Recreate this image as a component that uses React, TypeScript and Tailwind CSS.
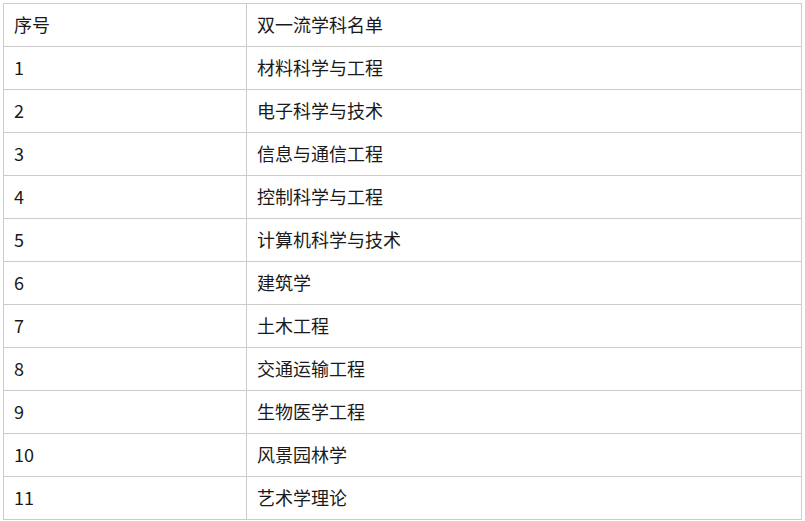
const rows = [
  ['序号', '双一流学科名单'],
  ['1', '材料科学与工程'],
  ['2', '电子科学与技术'],
  ['3', '信息与通信工程'],
  ['4', '控制科学与工程'],
  ['5', '计算机科学与技术'],
  ['6', '建筑学'],
  ['7', '土木工程'],
  ['8', '交通运输工程'],
  ['9', '生物医学工程'],
  ['10', '风景园林学'],
  ['11', '艺术学理论'],
]

export default function App() {
  return (
    <div className="w-[805px] h-[521px] bg-white pt-[3px] pl-[3px] text-[18px] text-[#1a1a1a]" style={{ fontFamily: '"Microsoft YaHei", "Noto Sans CJK SC", "Noto Sans", sans-serif' }}>
      <div className="w-[799px] border-t border-l border-r border-[#cccccc]">
        {rows.map(([no, name]) => (
          <div key={no} className="flex h-[43px] border-b border-[#cccccc]">
            <div className="w-[243px] border-r border-[#cccccc] pl-[10px] pb-[2px] flex items-center">{no}</div>
            <div className="flex-1 pl-[10px] pb-[2px] flex items-center">{name}</div>
          </div>
        ))}
      </div>
    </div>
  )
}
